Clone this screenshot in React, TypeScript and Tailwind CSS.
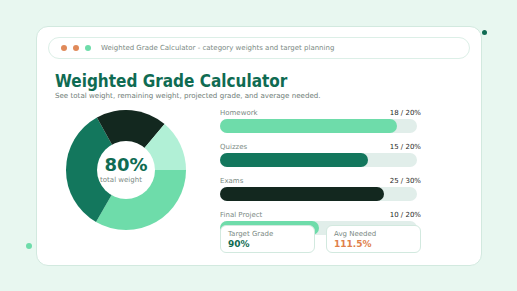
const categories = [
  { name: 'Homework', earned: 18, weight: 20, color: 'bg-[#6edcaa]' },
  { name: 'Quizzes', earned: 15, weight: 20, color: 'bg-[#13775d]' },
  { name: 'Exams', earned: 25, weight: 30, color: 'bg-[#13281f]' },
  { name: 'Final Project', earned: 10, weight: 20, color: 'bg-[#6edcaa]' },
]

const slices = [
  { from: 0, to: 120, color: '#6edcaa' },
  { from: 120, to: 241, color: '#13775d' },
  { from: 241, to: 310, color: '#13281f' },
  { from: 310, to: 360, color: '#b1f0d6' },
]

function arc(from: number, to: number, r: number, c: number) {
  const rad = (d: number) => (d * Math.PI) / 180
  const p = (d: number) => `${c + r * Math.cos(rad(d))} ${c + r * Math.sin(rad(d))}`
  const large = to - from > 180 ? 1 : 0
  return `M ${c} ${c} L ${p(from)} A ${r} ${r} 0 ${large} 1 ${p(to)} Z`
}

function Donut() {
  return (
    <div className="relative h-[120px] w-[120px]">
      <svg width="120" height="120" viewBox="0 0 120 120">
        {slices.map((s, i) => (
          <path key={i} d={arc(s.from, s.to, 60, 60)} fill={s.color} />
        ))}
        <circle cx="60" cy="60" r="29" fill="#fff" />
      </svg>
      <div className="absolute inset-0 flex flex-col items-center justify-center">
        <div className="text-[18px] font-bold leading-none text-[#0f6b52]">80%</div>
        <div className="-ml-[10px] mt-[3px] text-[7px] leading-none text-[#7b8a84]">total weight</div>
      </div>
    </div>
  )
}

export default function App() {
  return (
    <div className="relative h-[291px] w-[517px] overflow-hidden bg-[#e8f7f0] font-['DejaVu_Sans',sans-serif]">
      <div className="absolute left-[482px] top-[30px] h-[5px] w-[5px] rounded-full bg-[#0f6b52]" />
      <div className="absolute left-[26px] top-[243px] h-[6px] w-[6px] rounded-full bg-[#6edcaa]" />
      <div className="ml-[36px] mt-[26px] h-[240px] w-[446px] rounded-[12px] border border-[#d2e9df] bg-white px-[11px] pt-[10px]">
        <div className="flex h-[22px] items-center gap-[6px] rounded-full border border-[#dcefe7] pl-[12px]">
          <span className="h-[6px] w-[6px] rounded-full bg-[#e08a5a]" />
          <span className="h-[6px] w-[6px] rounded-full bg-[#e08a5a]" />
          <span className="h-[6px] w-[6px] rounded-full bg-[#6edcaa]" />
          <span className="ml-[4px] text-[7px] text-[#7b8a84]">
            Weighted Grade Calculator - category weights and target planning
          </span>
        </div>
        <div className="px-[7px]">
          <h1 className="mt-[14px] font-stretch-condensed text-[17px] font-bold leading-none text-[#0f6b52]">
            Weighted Grade Calculator
          </h1>
          <p className="mt-[2px] text-[7.1px] leading-none text-[#6f7d77]">
            See total weight, remaining weight, projected grade, and average needed.
          </p>
          <div className="mt-[11px] flex">
            <div className="ml-[11px]">
              <Donut />
            </div>
            <div className="ml-[34px] w-[201px]">
              {categories.map((c) => (
                <div key={c.name} className="mb-[11px]">
                  <div className="flex items-center justify-between text-[7px] leading-none">
                    <span className="text-[#7b8a84]">{c.name}</span>
                    <span className="text-[#1f2925]">
                      {c.earned} / {c.weight}%
                    </span>
                  </div>
                  <div className="mt-[2px] mr-[4px] h-[14px] rounded-full bg-[#e1eeea]">
                    <div
                      className={`h-full rounded-full ${c.color}`}
                      style={{ width: `${(c.earned / c.weight) * 100}%` }}
                    />
                  </div>
                </div>
              ))}
              <div className="relative -mt-[21px] grid grid-cols-2 gap-[11px]">
                <div className="h-[28px] rounded-[6px] border border-[#d2e9df] bg-white px-[7px] pt-[5px]">
                  <div className="text-[7px] leading-none text-[#7b8a84]">Target Grade</div>
                  <div className="mt-[2px] text-[9px] font-bold leading-none text-[#0f6b52]">90%</div>
                </div>
                <div className="h-[28px] rounded-[6px] border border-[#d2e9df] bg-white px-[7px] pt-[5px]">
                  <div className="text-[7px] leading-none text-[#7b8a84]">Avg Needed</div>
                  <div className="mt-[2px] text-[9px] font-bold leading-none text-[#e0804a]">111.5%</div>
                </div>
              </div>
            </div>
          </div>
        </div>
      </div>
    </div>
  )
}
